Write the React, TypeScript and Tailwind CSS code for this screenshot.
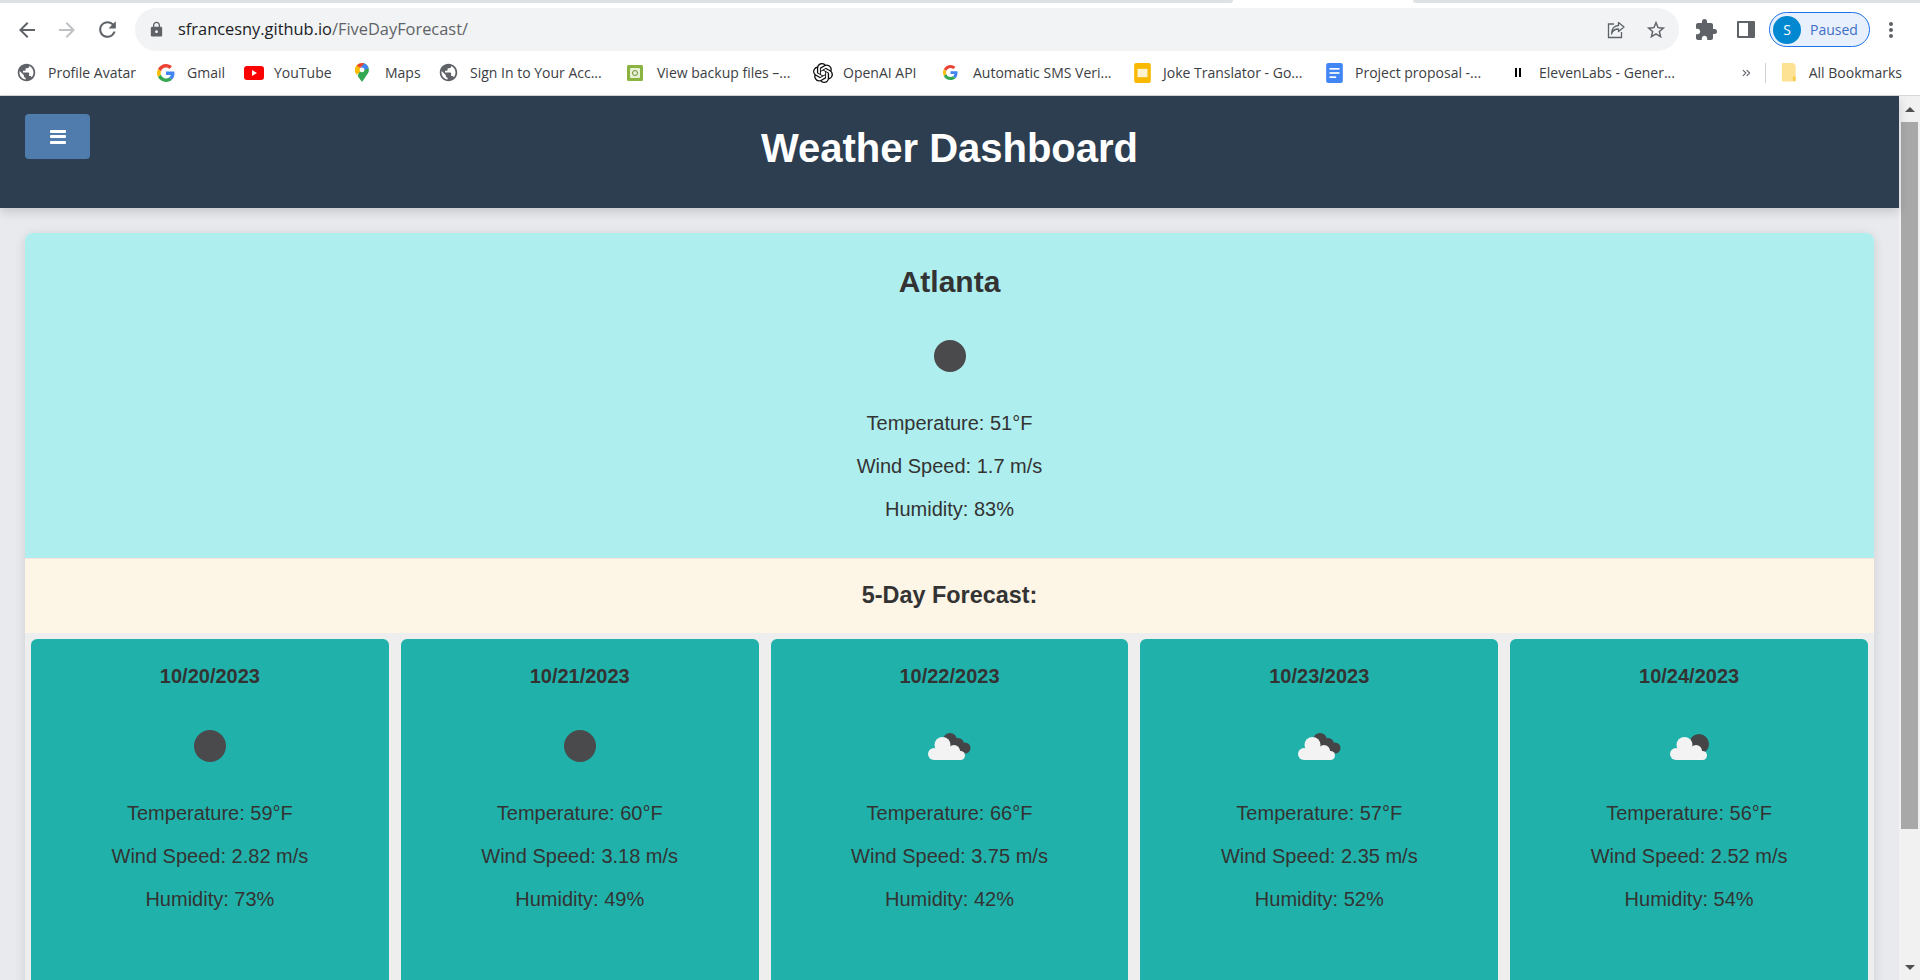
import { MdArrowBack, MdArrowForward, MdRefresh, MdLock, MdStarBorder, MdExtension, MdMoreVert, MdPublic } from "react-icons/md";
import { SiOpenai } from "react-icons/si";
import { ChevronsRight } from "lucide-react";

const chromeFont = "font-['Open_Sans','Noto_Sans',sans-serif]";

function Globe() {
  return <MdPublic className="w-[21px] h-[21px] -ml-[2px] text-[#5f6368]" />;
}

function GoogleG({ size = 18 }: { size?: number }) {
  return (
    <svg viewBox="0 0 48 48" width={size} height={size}>
      <path fill="#EA4335" d="M24 9.500c3.500 0 6.700 1.300 9.100 3.500l6.800-6.800C35.900 2.400 30.400 0 24 0 14.600 0 6.500 5.400 2.600 13.200l7.900 6.100C12.400 13.700 17.700 9.500 24 9.500z" />
      <path fill="#4285F4" d="M46.500 24.500c0-1.600-.1-3.100-.4-4.500H24v9h12.700c-.6 2.900-2.200 5.400-4.700 7.100l7.700 6C44.100 38 46.500 31.800 46.500 24.500z" />
      <path fill="#FBBC05" d="M10.500 28.700c-.5-1.500-.8-3-.8-4.700s.3-3.200.8-4.700l-7.900-6.100C.9 16.500 0 20.100 0 24s.9 7.500 2.600 10.800l7.900-6.100z" />
      <path fill="#34A853" d="M24 48c6.500 0 11.900-2.100 15.900-5.800l-7.700-6c-2.200 1.400-4.900 2.300-8.200 2.300-6.300 0-11.600-4.200-13.500-9.800l-7.900 6.100C6.500 42.600 14.600 48 24 48z" />
    </svg>
  );
}

function YouTubeIcon() {
  return (
    <svg viewBox="0 0 20 14" className="w-5 h-[14px]">
      <rect width="20" height="14" rx="3" fill="#f00" />
      <path d="M8 4l5 3-5 3z" fill="#fff" />
    </svg>
  );
}

function MapsIcon() {
  return (
    <svg viewBox="0 0 16 22" className="w-[14px] h-[19px]">
      <path d="M8 0a8 8 0 0 1 6.900 12L8 22 3 15z" fill="#34a853" />
      <path d="M8 0a8 8 0 0 0-6.100 13.200L8 8z" fill="#fbbc05" />
      <path d="M1.900 3l4 2.500L8 8 1.900 13.200A8 8 0 0 1 1.900 3z" fill="#fbbc05" />
      <path d="M1.900 2.900A8 8 0 0 1 8 0l3 .6-5 5z" fill="#ea4335" />
      <path d="M11 .6A8 8 0 0 1 15.500 6L10 8l-4-2.400z" fill="#4285f4" />
      <circle cx="8" cy="8" r="2.800" fill="#fff" />
    </svg>
  );
}

function BackupIcon() {
  return (
    <svg viewBox="0 0 16 16" className="w-4 h-4">
      <rect width="16" height="16" rx="1.500" fill="#8ab33f" />
      <rect x="3" y="3" width="10" height="10" rx="1" fill="#e8f0d8" />
      <circle cx="8" cy="8" r="2.500" fill="none" stroke="#6d9130" strokeWidth="1" />
    </svg>
  );
}

function SlidesIcon() {
  return (
    <svg viewBox="0 0 20 24" className="w-[19px] h-[20px]">
      <rect width="20" height="24" rx="2.500" fill="#f9b900" />
      <rect x="4" y="7" width="12" height="10" fill="#fdf3d0" />
    </svg>
  );
}

function DocsIcon() {
  return (
    <svg viewBox="0 0 20 24" className="w-[19px] h-[20px]">
      <rect width="20" height="24" rx="2.500" fill="#4285f4" />
      <rect x="4" y="6" width="12" height="2" fill="#fff" />
      <rect x="4" y="11" width="12" height="2" fill="#fff" />
      <rect x="4" y="16" width="8" height="2" fill="#fff" />
    </svg>
  );
}

function ElevenIcon() {
  return (
    <span className="flex gap-[2px] w-[18px] justify-center">
      <span className="w-[2px] h-[9px] bg-black" />
      <span className="w-[2px] h-[9px] bg-black" />
    </span>
  );
}

function FolderIcon() {
  return (
    <svg viewBox="0 0 16 20" className="w-[16px] h-[19px]">
      <path d="M1.500 0h11L15 2.500v16a1 1 0 0 1-1 1H1.500a1 1 0 0 1-1-1V1a1 1 0 0 1 1-1z" fill="#fde293" />
      <rect x="12" y="14" width="3" height="5" rx="1" fill="#f9cc4e" />
    </svg>
  );
}

function ShareBox() {
  return (
    <svg viewBox="0 0 20 20" className="w-[20px] h-[20px]" fill="none" stroke="#5f6368" strokeWidth="1.300">
      <path d="M8 4H2.500v13.500h13V12" />
      <path d="M12.500 2.500L18 7l-5.500 4.500V9C9 9 6.500 10.500 5.500 14c0-5 2.500-8.500 7-8.500z" strokeLinejoin="round" />
    </svg>
  );
}

const bookmarks = [
  { label: "Profile Avatar", icon: <Globe />, width: "w-[139px]" },
  { label: "Gmail", icon: <GoogleG />, width: "w-[87px]" },
  { label: "YouTube", icon: <YouTubeIcon />, width: "w-[111px]" },
  { label: "Maps", icon: <MapsIcon />, width: "w-[85px]" },
  { label: "Sign In to Your Acc...", icon: <Globe />, width: "w-[187px]" },
  { label: "View backup files –...", icon: <BackupIcon />, width: "w-[186px]" },
  { label: "OpenAI API", icon: <SiOpenai className="w-5 h-5 text-[#111]" />, width: "w-[130px]" },
  { label: "Automatic SMS Veri...", icon: <GoogleG size={15} />, width: "w-[190px]" },
  { label: "Joke Translator - Go...", icon: <SlidesIcon />, width: "w-[192px]" },
  { label: "Project proposal -...", icon: <DocsIcon />, width: "w-[184px]" },
  { label: "ElevenLabs - Gener...", icon: <ElevenIcon />, width: "w-[226px]" },
];

function BrowserChrome() {
  return (
    <div className={`${chromeFont} shrink-0 bg-white`}>
      {/* Tab strip remains */}
      <div className="h-[8px] flex">
        <div className="w-[1233px] h-[3px] bg-[#dee1e6] rounded-br-md" />
        <div className="w-[180px]" />
        <div className="flex-1 h-[3px] bg-[#dee1e6] rounded-bl-md" />
      </div>

      {/* Toolbar */}
      <div className="h-[43px] flex items-center pl-[15px] pr-[10px]">
        <MdArrowBack className="w-[24px] h-[24px] text-[#5f6368]" />
        <MdArrowForward className="w-[24px] h-[24px] text-[#bfc1c4] ml-[16px]" />
        <MdRefresh className="w-[25px] h-[25px] text-[#5f6368] ml-[16px]" />
        <div className="ml-[15px] w-[1544px] h-[43px] rounded-full bg-[#f1f3f4] flex items-center pl-[13px] pr-[12px]">
          <MdLock className="w-[17px] h-[17px] text-[#5f6368]" />
          <span className="ml-[13px] text-[16.4px] text-[#202124]">
            sfrancesny.github.io<span className="text-[#5f6368]">/FiveDayForecast/</span>
          </span>
          <span className="ml-auto"><ShareBox /></span>
          <MdStarBorder className="ml-[19px] w-[22px] h-[22px] text-[#5f6368]" />
        </div>
        <MdExtension className="ml-[15px] w-[24px] h-[24px] text-[#5f6368]" />
        <div className="ml-[19px] w-[18px] h-[17px] border-[2px] border-[#5f6368] border-r-[7px] rounded-[1px]" />
        <div className="ml-[14px] w-[101px] h-[35px] rounded-full border border-[#1a73e8] bg-[#e8f0fe] flex items-center pl-[3px]">
          <span className="w-[28px] h-[28px] rounded-full bg-[#0288d1] text-white text-[14px] flex items-center justify-center">S</span>
          <span className="ml-[9px] text-[14px] text-[#3f6fc4]">Paused</span>
        </div>
        <MdMoreVert className="ml-[9px] w-[24px] h-[24px] text-[#5f6368]" />
      </div>

      {/* Bookmarks bar */}
      <div className="h-[45px] flex items-center pl-[18px] pr-[18px] pb-[1px] border-b border-[#d6d8da]">
        {bookmarks.map((b) => (
          <div key={b.label} className={`${b.width} shrink-0 flex items-center`}>
            <span className="w-[30px] shrink-0 flex items-center">{b.icon}</span>
            <span className="text-[14px] text-[#3c4043] whitespace-nowrap">{b.label}</span>
          </div>
        ))}
        <ChevronsRight className="ml-[5px] w-[14px] h-[14px] text-[#5f6368]" />
        <div className="ml-[12px] w-px h-[20px] bg-[#cfd1d3]" />
        <div className="ml-[15px]"><FolderIcon /></div>
        <span className="ml-[12px] text-[14px] text-[#3c4043] whitespace-nowrap">All Bookmarks</span>
      </div>
    </div>
  );
}

function Scrollbar() {
  return (
    <div className="w-[21px] shrink-0 bg-[#f1f1f1] flex flex-col items-center">
      <div className="h-[26px] flex items-center justify-center pt-[1px]">
        <div className="w-0 h-0 border-x-[5px] border-x-transparent border-b-[5px] border-b-[#505050]" />
      </div>
      <div className="w-[17px] h-[707px] bg-[#a8a8a8]" />
      <div className="mt-auto h-[26px] flex items-center justify-center">
        <div className="w-0 h-0 border-x-[5px] border-x-transparent border-t-[5px] border-t-[#505050]" />
      </div>
    </div>
  );
}

function Moon() {
  return <div className="w-[32px] h-[32px] rounded-full bg-[#4a4a4d]" />;
}

function Cloud({ x = 0 }: { x?: number }) {
  return (
    <g transform={`translate(${x} 1)`} fill="#f3f3f3">
      <circle cx="7" cy="25" r="6" />
      <circle cx="15.500" cy="16" r="8" />
      <circle cx="27" cy="22" r="6" />
      <circle cx="33.500" cy="26.500" r="4.500" />
      <rect x="7" y="22" width="27" height="9" />
    </g>
  );
}

function BrokenClouds() {
  return (
    <svg viewBox="0 0 46 36" className="w-[46px] h-[36px]">
      <g transform="translate(0 1)" fill="#454548">
        <circle cx="24" cy="11" r="7" />
        <circle cx="32" cy="15" r="6" />
        <circle cx="39" cy="19" r="5.500" />
      </g>
      <Cloud x={1} />
    </svg>
  );
}

function FewClouds() {
  return (
    <svg viewBox="0 0 46 36" className="w-[46px] h-[36px]">
      <circle cx="33" cy="16" r="10" fill="#454548" />
      <Cloud x={3} />
    </svg>
  );
}

const forecast = [
  { date: "10/20/2023", temp: 59, wind: "2.82", humidity: 73, icon: <Moon /> },
  { date: "10/21/2023", temp: 60, wind: "3.18", humidity: 49, icon: <Moon /> },
  { date: "10/22/2023", temp: 66, wind: "3.75", humidity: 42, icon: <BrokenClouds /> },
  { date: "10/23/2023", temp: 57, wind: "2.35", humidity: 52, icon: <BrokenClouds /> },
  { date: "10/24/2023", temp: 56, wind: "2.52", humidity: 54, icon: <FewClouds /> },
];

function Stats({ temp, wind, humidity }: { temp: number; wind: string; humidity: number }) {
  return (
    <div className="text-[20px] leading-[22px] text-center text-[#333] flex flex-col gap-[21px]">
      <p>Temperature: {temp}°F</p>
      <p>Wind Speed: {wind} m/s</p>
      <p>Humidity: {humidity}%</p>
    </div>
  );
}

export default function App() {
  return (
    <div className="h-[980px] flex flex-col overflow-hidden font-['Liberation_Sans',Arial,sans-serif]">
      <BrowserChrome />
      <div className="flex-1 flex min-h-0">
        <div className="flex-1 min-w-0 bg-[#e9eaee]">
          <header className="relative h-[112px] bg-[#2c3e50] shadow-[0_4px_10px_rgba(0,0,0,0.15)] pt-[18px] pl-[25px]">
            <button className="w-[65px] h-[45px] rounded-[4px] bg-[#4f7cac] flex items-center justify-center">
              <span className="w-[16px] flex flex-col gap-[2.5px]">
                <span className="h-[3px] bg-white rounded-[1px]" />
                <span className="h-[3px] bg-white rounded-[1px]" />
                <span className="h-[3px] bg-white rounded-[1px]" />
              </span>
            </button>
            <h1 className="absolute inset-x-0 top-[29px] text-center text-[40px] leading-[46px] font-bold text-white">
              Weather Dashboard
            </h1>
          </header>

          <main className="mt-[25px] mx-[25px] rounded-[8px] bg-[#eeeeee] shadow-[0_2px_12px_rgba(0,0,0,0.12)] overflow-hidden">
            <section className="h-[325px] bg-[#afeeee] flex flex-col items-center pt-[32px]">
              <h2 className="text-[30px] leading-[34px] font-bold text-[#333]">Atlanta</h2>
              <div className="mt-[41px] mb-[40px]"><Moon /></div>
              <Stats temp={51} wind="1.7" humidity={83} />
            </section>
            <div className="h-[75px] pb-[2px] bg-[#fdf5e6] border-t border-[#f5e3dc] flex items-center justify-center">
              <h3 className="text-[23.4px] leading-[26px] font-bold text-[#333]">5-Day Forecast:</h3>
            </div>
            <div className="grid grid-cols-5 gap-[12px] px-[6px] pt-[6px]">
              {forecast.map((day) => (
                <div key={day.date} className="h-[400px] rounded-[6px] bg-[#20b2aa] flex flex-col items-center pt-[26px]">
                  <h4 className="text-[20px] leading-[22px] font-bold text-[#333]">{day.date}</h4>
                  <div className="h-[36px] mt-[41px] mb-[38px] flex items-center justify-center">{day.icon}</div>
                  <Stats temp={day.temp} wind={day.wind} humidity={day.humidity} />
                </div>
              ))}
            </div>
          </main>
        </div>
        <Scrollbar />
      </div>
    </div>
  );
}
